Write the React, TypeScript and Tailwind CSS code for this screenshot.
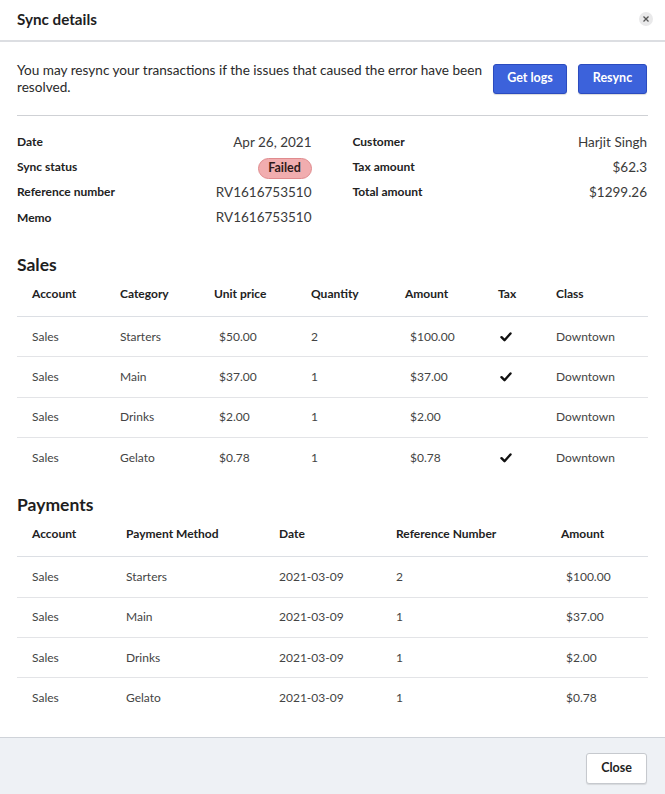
import { ReactNode } from "react";

const details = [
  { label: "Date", value: "Apr 26, 2021" },
  { label: "Sync status", value: "Failed", badge: true },
  { label: "Reference number", value: "RV1616753510" },
  { label: "Memo", value: "RV1616753510" },
];

const totals = [
  { label: "Customer", value: "Harjit Singh" },
  { label: "Tax amount", value: "$62.3" },
  { label: "Total amount", value: "$1299.26" },
];

const sales = [
  ["Sales", "Starters", "$50.00", "2", "$100.00", true, "Downtown"],
  ["Sales", "Main", "$37.00", "1", "$37.00", true, "Downtown"],
  ["Sales", "Drinks", "$2.00", "1", "$2.00", false, "Downtown"],
  ["Sales", "Gelato", "$0.78", "1", "$0.78", true, "Downtown"],
] as const;

const payments = [
  ["Sales", "Starters", "2021-03-09", "2", "$100.00"],
  ["Sales", "Main", "2021-03-09", "1", "$37.00"],
  ["Sales", "Drinks", "2021-03-09", "1", "$2.00"],
  ["Sales", "Gelato", "2021-03-09", "1", "$0.78"],
];

const salesCols = "grid grid-cols-[88px_94px_97px_94px_93px_58px_106px]";
const payCols = "grid grid-cols-[94px_153px_117px_165px_101px]";

const Check = () => (
  <svg width="12" height="10" viewBox="0 0 12 10" className="ml-[2px]">
    <path
      d="M1.5 5.2 L4.5 8.2 L10.5 1.5"
      fill="none"
      stroke="#111"
      strokeWidth="2.4"
      strokeLinecap="round"
      strokeLinejoin="round"
    />
  </svg>
);

const Head = ({ children }: { children: ReactNode }) => (
  <div className="pl-[15px] text-[12px] font-bold leading-[16px] text-[#222]">
    {children}
  </div>
);

const Cell = ({ children, money }: { children: ReactNode; money?: boolean }) => (
  <div
    className={`flex items-center text-[12px] leading-[16px] text-[#444] ${
      money ? "pl-[20px]" : "pl-[15px]"
    }`}
  >
    {children}
  </div>
);

export default function App() {
  return (
    <div className="flex h-[794px] w-[665px] flex-col bg-white font-['Lato',sans-serif] text-[#222]">
      {/* Header */}
      <div className="flex h-[42px] shrink-0 items-center justify-between border-b-2 border-[#dcdee2] pl-[17px] pr-[12px] pb-[2px]">
        <h1 className="text-[15.2px] font-bold leading-[20px] text-[#1e1e1e]">Sync details</h1>
        <button className="flex h-[14px] w-[14px] items-center justify-center rounded-full bg-[#e9e9ea]">
          <svg width="6" height="6" viewBox="0 0 6 6">
            <path d="M0.5 0.5 L5.5 5.5 M5.5 0.5 L0.5 5.5" stroke="#555" strokeWidth="1.3" />
          </svg>
        </button>
      </div>

      <div className="flex flex-1 flex-col px-[17px]">
        {/* Resync message */}
        <div className="flex items-center justify-between border-b border-[#cfd1d5] pt-[20px] pb-[20px]">
          <p className="w-[470px] text-[13.6px] leading-[16.5px] text-[#2a2a2a]">
            You may resync your transactions if the issues that caused the error have been
            resolved.
          </p>
          <div className="mr-[1px] flex gap-[11px]">
            <button className="h-[30px] w-[74px] rounded-[3px] border border-[#2b4bbf] bg-[#3c62db] text-[12.5px] font-bold text-white shadow-[0_1px_1px_rgba(0,0,0,0.15)]">
              Get logs
            </button>
            <button className="h-[30px] w-[69px] rounded-[3px] border border-[#2b4bbf] bg-[#3c62db] text-[12.5px] font-bold text-white shadow-[0_1px_1px_rgba(0,0,0,0.15)]">
              Resync
            </button>
          </div>
        </div>

        {/* Details */}
        <div className="grid grid-cols-2 gap-x-[41px] pt-[13px] pr-[1px]">
          <div className="flex flex-col">
            {details.map((d) => (
              <div key={d.label} className="flex h-[25.3px] items-center justify-between">
                <span className="text-[12px] font-bold text-[#222]">{d.label}</span>
                {d.badge ? (
                  <span className="mt-[3px] flex h-[21px] w-[54px] items-center justify-center rounded-full border border-[#e08b8e] bg-[#f1adaf] text-[12.5px] font-bold text-[#2e1a1a]">
                    {d.value}
                  </span>
                ) : (
                  <span className="text-[13.5px] text-[#3a3a3a]">{d.value}</span>
                )}
              </div>
            ))}
          </div>
          <div className="flex flex-col">
            {totals.map((d) => (
              <div key={d.label} className="flex h-[25.3px] items-center justify-between">
                <span className="text-[12px] font-bold text-[#222]">{d.label}</span>
                <span className="text-[13.5px] text-[#3a3a3a]">{d.value}</span>
              </div>
            ))}
          </div>
        </div>

        {/* Sales */}
        <h2 className="mt-[23px] h-[24px] text-[17.5px] font-bold leading-[24px] text-[#1e1e1e]">Sales</h2>
        <div className={`${salesCols} border-b border-[#dcdfe4] pt-[9px] pb-[14px]`}>
          {["Account", "Category", "Unit price", "Quantity", "Amount", "Tax", "Class"].map((h) => (
            <Head key={h}>{h}</Head>
          ))}
        </div>
        {sales.map((r, i) => (
          <div
            key={i}
            className={`${salesCols} h-[40.3px] ${i < sales.length - 1 ? "border-b border-[#e3e4e7]" : ""}`}
          >
            <Cell>{r[0]}</Cell>
            <Cell>{r[1]}</Cell>
            <Cell money>{r[2]}</Cell>
            <Cell>{r[3]}</Cell>
            <Cell money>{r[4]}</Cell>
            <Cell>{r[5] ? <Check /> : null}</Cell>
            <Cell>{r[6]}</Cell>
          </div>
        ))}

        {/* Payments */}
        <h2 className="mt-[15px] h-[24px] text-[17.5px] font-bold leading-[24px] text-[#1e1e1e]">Payments</h2>
        <div className={`${payCols} border-b border-[#dcdfe4] pt-[9px] pb-[14px]`}>
          {["Account", "Payment Method", "Date", "Reference Number", "Amount"].map((h) => (
            <Head key={h}>{h}</Head>
          ))}
        </div>
        {payments.map((r, i) => (
          <div
            key={i}
            className={`${payCols} h-[40.3px] ${i < payments.length - 1 ? "border-b border-[#e3e4e7]" : ""}`}
          >
            <Cell>{r[0]}</Cell>
            <Cell>{r[1]}</Cell>
            <Cell>{r[2]}</Cell>
            <Cell>{r[3]}</Cell>
            <Cell money>{r[4]}</Cell>
          </div>
        ))}
      </div>

      {/* Footer */}
      <div className="flex h-[57px] shrink-0 items-start justify-end border-t border-[#cfd3d9] bg-[#eef1f5] pt-[15px] pr-[18px]">
        <button className="h-[31px] w-[61px] rounded-[3px] border border-[#c6c9ce] bg-white text-[12.5px] font-bold text-[#222] shadow-[0_1px_1px_rgba(0,0,0,0.1)]">
          Close
        </button>
      </div>
    </div>
  );
}
